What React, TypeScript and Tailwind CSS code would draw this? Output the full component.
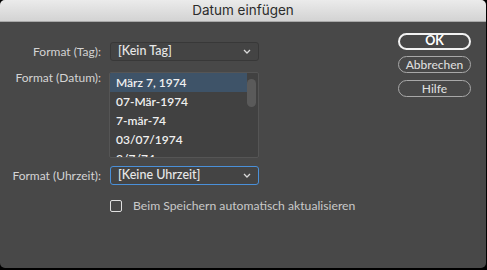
import React from "react"

const font = { fontFamily: "Lato, 'Noto Sans', sans-serif" }

function Chevron() {
  return (
    <svg width="8" height="5" viewBox="0 0 8 5" className="text-[#d8d8d8]">
      <path d="M1 1l3 3 3-3" fill="none" stroke="currentColor" strokeWidth="1.3" />
    </svg>
  )
}

function Select({ value, focused }: { value: string; focused?: boolean }) {
  return (
    <div
      className={
        "flex h-[19px] w-[149px] items-center justify-between rounded-[3px] bg-[#444444] pl-[7px] pr-[7px] text-[12.5px] font-medium text-[#e8e8e8] " +
        (focused ? "border border-[#4a90d9]" : "border border-[#383838]")
      }
    >
      <span>{value}</span>
      <Chevron />
    </div>
  )
}

const dates = ["März 7, 1974", "07-Mär-1974", "7-mär-74", "03/07/1974", "3/7/74"]

export default function App() {
  return (
    <div className="h-[270px] w-[487px] bg-black" style={font}>
      <div className="flex h-[268px] w-[486px] flex-col overflow-hidden rounded-[5px] bg-[#484848]">
        <div
          className="flex h-[22px] items-center justify-center border-b border-[#a8a8a8] bg-gradient-to-b from-[#ebebeb] to-[#d3d3d3] text-[13.5px] text-[#2c2c2c]"
          style={{ fontFamily: "Inter, 'Noto Sans', sans-serif" }}
        >
          Datum einfügen
        </div>

        <div className="flex flex-1">
          <div className="flex w-[398px] flex-col pt-[20px] text-[12px] text-[#d4d4d4]">
            <div className="flex items-center">
              <div className="w-[101px] text-right">Format (Tag):</div>
              <div className="ml-[9px]">
                <Select value="[Kein Tag]" />
              </div>
            </div>

            <div className="mt-[11px] flex">
              <div className="mt-[-3px] w-[101px] text-right">Format (Datum):</div>
              <div className="ml-[8px] flex h-[86px] w-[150px] overflow-hidden rounded-[2px] border border-[#555555] bg-[#414141]">
                <div className="flex-1">
                  {dates.map((d, i) => (
                    <div
                      key={d}
                      className={
                        "flex h-[19px] items-center pl-[6px] text-[12px] font-semibold text-[#f0f0f0] " +
                        (i === 0 ? "bg-[#3e5368]" : "")
                      }
                    >
                      {d}
                    </div>
                  ))}
                </div>
                <div className="w-[11px] pt-[6px]">
                  <div className="h-[28px] w-[9px] rounded-full bg-[#5a5a5a]" />
                </div>
              </div>
            </div>

            <div className="mt-[8px] flex items-center">
              <div className="w-[101px] text-right">Format (Uhrzeit):</div>
              <div className="ml-[9px]">
                <Select value="[Keine Uhrzeit]" focused />
              </div>
            </div>

            <div className="mt-[12px] flex items-center">
              <div className="ml-[110px] h-[12px] w-[12px] rounded-[2px] border border-[#e0e0e0]" />
              <div className="ml-[11px] text-[12.2px] text-[#c8c8c8]">Beim Speichern automatisch aktualisieren</div>
            </div>
          </div>

          <div className="flex flex-col gap-[6px] pt-[11px]">
            <div className="flex h-[17px] w-[73px] items-center justify-center rounded-full border-2 border-[#f2f2f2] text-[12.5px] font-bold text-white">
              OK
            </div>
            <div className="flex h-[17px] w-[73px] items-center justify-center rounded-full border border-[#a8a8a8] text-[12px] font-medium text-[#dcdcdc]">
              Abbrechen
            </div>
            <div className="mt-[1px] flex h-[17px] w-[73px] items-center justify-center rounded-full border border-[#a8a8a8] text-[12px] font-medium text-[#dcdcdc]">
              Hilfe
            </div>
          </div>
        </div>
      </div>
    </div>
  )
}
